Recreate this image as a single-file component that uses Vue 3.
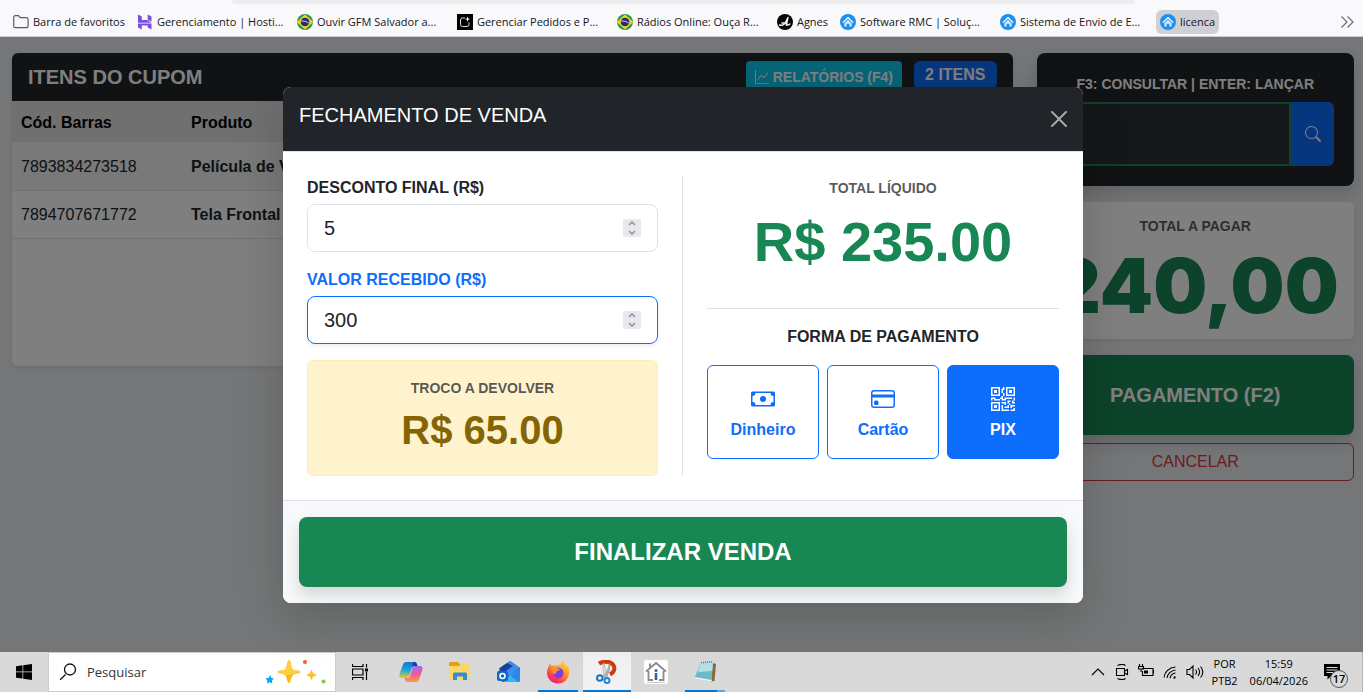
<template>
  <div class="screen">

    <!-- ── Bookmarks toolbar ── -->
    <header class="browser-bar">
      <div class="address-edge"></div>
      <nav class="bookmarks">
        <a
          v-for="(b, i) in bookmarks"
          :key="i"
          href="#"
          class="bookmark"
          :class="{ wide: b.wide, active: b.active }"
          @click.prevent
        >
          <svg v-if="b.icon === 'folder'" viewBox="0 0 16 16" width="16" height="16">
            <path d="M.7 3.2a1.5 1.5 0 0 1 1.5-1.5h3.2l1.9 2h6.3a1.5 1.5 0 0 1 1.5 1.5v7a1.5 1.5 0 0 1-1.5 1.5H2.2a1.5 1.5 0 0 1-1.500-1.500z" fill="none" stroke="#5b5b66" stroke-width="1.2" />
          </svg>
          <svg v-else-if="b.icon === 'hosting'" viewBox="0 0 16 16" width="16" height="16">
            <path d="M1 .5l3.800 2V6h5.500L14.500 8.800H1zM10.700.5l3.800 2v5.300l-3.800-2zM1 9.600h9.800l3.700 0V15.500l-3.800-2V11.500H4.800V15.500L1 13.500z" fill="#7a4fe0" />
          </svg>
          <svg v-else-if="b.icon === 'brazil'" viewBox="0 0 16 16" width="16" height="16">
            <circle cx="8" cy="8" r="8" fill="#2d9b4a" />
            <path d="M8 1.500L15.200 8 8 14.500.800 8z" fill="#f5d327" stroke="#f5d327" stroke-width="1.500" stroke-linejoin="round" />
            <circle cx="8" cy="8" r="4.300" fill="#2a2a72" />
            <path d="M4 7.200c2.800-.6 5.500.2 7.800 2" fill="none" stroke="#c9cde8" stroke-width="1" />
          </svg>
          <svg v-else-if="b.icon === 'orders'" viewBox="0 0 16 16" width="16" height="16">
            <path d="M0 0h16v16H0z" fill="#000" />
            <path d="M8 4H5.500A2 2 0 0 0 3.500 6v4.500a2 2 0 0 0 2 2H10a2 2 0 0 0 2-2V8.500" fill="none" stroke="#ddd" stroke-width="1" />
            <path d="M10.500 2.500l.7 1.900 1.900.7-1.900.7-.7 1.900-.7-1.900-1.900-.7 1.900-.7z" fill="#fff" />
          </svg>
          <svg v-else-if="b.icon === 'agnes'" viewBox="0 0 16 16" width="16" height="16">
            <circle cx="8" cy="8" r="8" fill="#050505" />
            <path d="M2.500 11c3 1 5-.5 6.500-3.500L11 3.500M10.800 4L9.300 11c1.500.3 2.500-.2 3.500-1M5 9l5 .2" fill="none" stroke="#fff" stroke-width="1.400" stroke-linecap="round" />
          </svg>
          <svg v-else viewBox="0 0 16 16" width="16" height="16">
            <circle cx="8" cy="8" r="8" fill="#1b90f0" />
            <path d="M2.800 8.600L8 3.700l5.200 4.900" fill="none" stroke="#fff" stroke-width="1.300" />
            <path d="M4.300 9.200L8 5.800l3.700 3.400v3.300H9.300V9.800H6.700v2.700H4.300z" fill="#cfe7fc" />
          </svg>
          <span>{{ b.label }}</span>
        </a>
        <button class="more-bookmarks" aria-label="Mais favoritos">
          <svg viewBox="0 0 14 14" width="14" height="14">
            <path d="M1.500 1.500L7 7l-5.500 5.500M7.500 1.500L13 7l-5.500 5.500" fill="none" stroke="#6a6a74" stroke-width="1.200" />
          </svg>
        </button>
      </nav>
    </header>

    <!-- ── Point of sale page ── -->
    <div class="viewport">
      <main class="pos-row">
        <section class="col-items">
          <div class="card items-card">
            <div class="items-header">
              <h2>ITENS DO CUPOM</h2>
              <div class="header-actions">
                <button class="btn-report">
                  <svg viewBox="0 0 16 16" width="14" height="14" fill="currentColor">
                    <path fill-rule="evenodd" d="M0 0h1v15h15v1H0zm14.817 3.113a.5.5 0 0 1 .07.704l-4.5 5.5a.5.5 0 0 1-.74.037L7.06 6.767l-3.656 5.027a.5.5 0 0 1-.808-.588l4-5.5a.5.5 0 0 1 .758-.06l2.609 2.61 4.15-5.073a.5.5 0 0 1 .704-.07" />
                  </svg>
                  RELATÓRIOS (F4)
                </button>
                <span class="badge">{{ items.length }} ITENS</span>
              </div>
            </div>
            <table class="items-table">
              <thead>
                <tr>
                  <th class="code">Cód. Barras</th>
                  <th>Produto</th>
                </tr>
              </thead>
              <tbody>
                <tr v-for="item in items" :key="item.code">
                  <td class="code">{{ item.code }}</td>
                  <td class="product">{{ item.name }}</td>
                </tr>
              </tbody>
            </table>
          </div>
        </section>

        <aside class="col-side">
          <div class="search-card">
            <label for="barcode">F3: CONSULTAR | ENTER: LANÇAR</label>
            <div class="search-group">
              <input id="barcode" v-model="barcode" type="text" />
              <button aria-label="Consultar">
                <svg viewBox="0 0 16 16" width="16" height="16" fill="currentColor">
                  <path d="M11.742 10.344a6.5 6.5 0 1 0-1.397 1.398h-.001q.044.06.098.115l3.85 3.85a1 1 0 0 0 1.415-1.414l-3.85-3.85a1 1 0 0 0-.115-.1zM12 6.5a5.5 5.5 0 1 1-11 0 5.5 5.5 0 0 1 11 0" />
                </svg>
              </button>
            </div>
          </div>
          <div class="card total-card">
            <span class="caption">TOTAL A PAGAR</span>
            <strong>240,00</strong>
          </div>
          <button class="btn-pay">PAGAMENTO (F2)</button>
          <button class="btn-cancel">CANCELAR</button>
        </aside>
      </main>

      <!-- ── Checkout modal ── -->
      <div class="backdrop">
        <div class="modal" role="dialog" aria-labelledby="modal-title">
          <div class="modal-header">
            <h1 id="modal-title">FECHAMENTO DE VENDA</h1>
            <button class="btn-close" aria-label="Fechar">
              <svg viewBox="0 0 16 16" width="16" height="16" fill="currentColor">
                <path d="M.293.293a1 1 0 0 1 1.414 0L8 6.586 14.293.293a1 1 0 1 1 1.414 1.414L9.414 8l6.293 6.293a1 1 0 0 1-1.414 1.414L8 9.414l-6.293 6.293a1 1 0 0 1-1.414-1.414L6.586 8 .293 1.707a1 1 0 0 1 0-1.414" />
              </svg>
            </button>
          </div>

          <div class="modal-body">
            <div class="pane pane-left">
              <div v-for="f in fields" :key="f.id" class="field" :class="{ primary: f.primary }">
                <label :for="f.id">{{ f.label }}</label>
                <div class="number-box">
                  <input :id="f.id" v-model.number="f.value" type="number" />
                  <div class="spinner">
                    <button tabindex="-1" aria-label="Aumentar" @click="f.value++">
                      <svg viewBox="0 0 8 5" width="8" height="5"><path d="M1 4l3-3 3 3" /></svg>
                    </button>
                    <button tabindex="-1" aria-label="Diminuir" @click="f.value--">
                      <svg viewBox="0 0 8 5" width="8" height="5"><path d="M1 1l3 3 3-3" /></svg>
                    </button>
                  </div>
                </div>
              </div>
              <div class="change-box">
                <span class="caption">TROCO A DEVOLVER</span>
                <strong>R$ {{ change }}</strong>
              </div>
            </div>

            <div class="pane pane-right">
              <div class="net-total">
                <span class="caption">TOTAL LÍQUIDO</span>
                <strong>R$ {{ netTotal }}</strong>
              </div>
              <h3>FORMA DE PAGAMENTO</h3>
              <div class="methods">
                <button
                  v-for="m in methods"
                  :key="m.name"
                  class="method"
                  :class="{ selected: m.name === method }"
                  @click="method = m.name"
                >
                  <svg viewBox="0 0 16 16" width="24" height="24" fill="currentColor">
                    <path v-for="(d, i) in m.paths" :key="i" :d="d" />
                  </svg>
                  {{ m.name }}
                </button>
              </div>
            </div>
          </div>

          <div class="modal-footer">
            <button class="btn-finish">FINALIZAR VENDA</button>
          </div>
        </div>
      </div>
    </div>

    <!-- ── Windows taskbar ── -->
    <footer class="taskbar">
      <button class="task-btn" aria-label="Iniciar">
        <svg viewBox="0 0 16 16" width="16" height="16">
          <path d="M0 2.200L6.500 1.300v6.300H0zM7.200 1.200L16 0v7.600H7.200zM0 8.300h6.500v6.300L0 13.700zM7.200 8.300H16V16l-8.800-1.200z" />
        </svg>
      </button>
      <label class="task-search">
        <svg viewBox="0 0 18 18" width="18" height="18">
          <path d="M6.500 11.500L1.200 16.800M16.500 6.500a5.500 5.500 0 1 1-11 0 5.500 5.500 0 0 1 11 0z" fill="none" stroke="#111" stroke-width="1.300" />
        </svg>
        <input type="text" placeholder="Pesquisar" aria-label="Pesquisar" />
        <svg class="sparkles" viewBox="0 0 62 26" width="62" height="26">
          <path d="M24 1c2 0 2 8 4 9.500S35.500 11 35.500 13 30 14 28 16s-2 8-4 8-2-6-4-8-7.500-1-7.500-3 5.500-1 7.500-2.500S22 1 24 1z" fill="#fbb91f" />
          <path d="M24 1c2 0 2 8 4 9.500S35.500 11 35.500 13c-8 1-10 4-16 3-2-2-7-1-7-3s5.500-1 7.500-2.500S22 1 24 1z" fill="#ffcf3f" />
          <path d="M46.500 10.500l1.700 3.800 3.800 1.700-3.800 1.700-1.700 3.800-1.700-3.800L41 16l3.800-1.700z" fill="#fbc02d" />
          <path d="M5.500 16l.8 3 2.700.5-2 2 .3 3-2.800-1.300L2 24.500l.3-3L.5 19.300l3.200-.6z" fill="#03a9f4" />
          <circle cx="40" cy="3" r="2.100" fill="#f4622c" />
          <circle cx="58.500" cy="22.500" r="2.100" fill="#8bc34a" />
        </svg>
      </label>
      <button class="task-btn" aria-label="Visão de tarefas">
        <svg viewBox="0 0 16 16" width="16" height="16">
          <path d="M.500 0v2.500h10.500V0M.500 16v-2.500h10.500V16M.500 5h10.500v6H.500zM14.500 0v3.500M14.500 8v8" fill="none" stroke="#000" stroke-width="1.200" />
          <path d="M13 4.500h3v3h-3z" />
        </svg>
      </button>

      <nav class="apps">
        <button class="task-btn" aria-label="Copilot">
          <svg viewBox="0 0 24 24" width="24" height="24">
            <defs>
              <linearGradient id="cp1" x1="0" y1="0" x2="0" y2="1">
                <stop offset="0" stop-color="#1673d8" /><stop offset=".5" stop-color="#18a8d8" /><stop offset="1" stop-color="#f0c830" />
              </linearGradient>
              <linearGradient id="cp2" x1="0" y1="0" x2="0" y2="1">
                <stop offset="0" stop-color="#9b6cf0" /><stop offset=".5" stop-color="#ef5a9d" /><stop offset="1" stop-color="#ff9a3d" />
              </linearGradient>
            </defs>
            <path d="M8 2h7.500c2 0 2.300 1.500 3 4h-3c-1.500 0-2.300.7-2.800 2.200L10.500 16c-.6 1.500-1.500 2-3 2H3c-2.500 0-3-2-2.300-4.500L4 4.500C4.600 2.800 5.800 2 8 2z" fill="url(#cp1)" />
            <path d="M16 22H8.500c-2 0-2.300-1.500-3-4h3c1.500 0 2.300-.7 2.800-2.200L13.500 8c.6-1.500 1.500-2 3-2H21c2.500 0 3 2 2.300 4.500L20 19.500c-.6 1.700-1.800 2.500-4 2.500z" fill="url(#cp2)" />
            <path d="M15 2c2.300 0 2.700 1.500 3.500 4h-3c-1.300 0-2 .5-2.500 1.500L14 2z" fill="#1b3fae" />
          </svg>
        </button>
        <button class="task-btn" aria-label="Explorador de Arquivos">
          <svg viewBox="0 0 24 24" width="24" height="24">
            <path d="M1 3.500A1.500 1.500 0 0 1 2.500 2H10l2 2.500V9H1z" fill="#e0a010" />
            <path d="M1 6h10l2-2h9v16H1z" fill="#fdd663" />
            <path d="M5 20v-6a1.500 1.500 0 0 1 1.500-1.500h11A1.500 1.500 0 0 1 19 14v6h-4v-3.500H9V20z" fill="#2f8fd8" />
          </svg>
        </button>
        <button class="task-btn" aria-label="Outlook">
          <svg viewBox="0 0 24 24" width="24" height="24">
            <path d="M2 8.500L13 1l10 7v12a2 2 0 0 1-2 2H5z" fill="#1257c0" />
            <path d="M13 1l10 7-11 8-8-7z" fill="#3f8cf2" />
            <path d="M10 3l6 3-10 7-3-5z" fill="#1a3f9e" />
            <path d="M23 9v11a2 2 0 0 1-2 2H6l6-6z" fill="#36b4f0" />
            <path d="M23 9l-9 7 7 6a2 2 0 0 0 2-2z" fill="#2a86ea" />
            <rect x="0" y="11" width="11" height="10" rx="2" fill="#1065c8" />
            <circle cx="5.500" cy="16" r="2.500" fill="none" stroke="#fff" stroke-width="1.600" />
          </svg>
        </button>
        <button class="task-btn running" aria-label="Firefox">
          <svg viewBox="0 0 24 24" width="24" height="24">
            <defs>
              <linearGradient id="ff" x1=".8" y1="0" x2=".2" y2="1">
                <stop offset="0" stop-color="#ffe040" /><stop offset=".4" stop-color="#ff9a28" /><stop offset=".75" stop-color="#ff3b50" /><stop offset="1" stop-color="#e31587" />
              </linearGradient>
            </defs>
            <path d="M12 23.500A11 11 0 0 1 1.500 9C2 7 3 6 3.500 3.500L6 6c1.500-.6 3-.6 4.500 0 1-.5 2.500-1.500 4.500-1.500-.5-1.500 0-3 1.500-4.500.5 3 3 3.500 4.500 6.500.2-.5.200-1 0-1.500 2.500 3 2.500 6 2.200 8.500A11.300 11.300 0 0 1 12 23.500z" fill="url(#ff)" />
            <circle cx="12.300" cy="13" r="5.200" fill="#7a3fe0" />
            <path d="M5.500 8C8 6.500 9.500 7.500 11 8.500l3 .5c-.5 1.500-2.500 1.500-3.500 2.500s0 2.500-1.200 2.500C7 14 5 11 5.500 8z" fill="#ff9528" />
          </svg>
        </button>
        <button class="task-btn running current" aria-label="Ferramenta de Captura">
          <svg viewBox="0 0 24 24" width="24" height="24">
            <path d="M4 3.500c4-2.500 10.500-2.500 13.500.5s2.500 8-2.500 10.500" fill="none" stroke="#cf3a0c" stroke-width="4" />
            <path d="M8.500 2l4 15-2 1.500C8 13 7.500 8 8.500 2z" fill="#e5e5e5" stroke="#999" stroke-width=".6" />
            <path d="M14.500 3c1.500 5-.5 10.500-4.500 14.500L8.500 16c3-3 5-7.500 6-13z" fill="#b5b5b5" stroke="#888" stroke-width=".6" />
            <circle cx="4.800" cy="18" r="2.800" fill="none" stroke="#1976c5" stroke-width="2" />
            <circle cx="12" cy="20.500" r="2.500" fill="none" stroke="#1f86d8" stroke-width="2" />
          </svg>
        </button>
        <button class="task-btn" aria-label="Sistema">
          <svg viewBox="0 0 24 24" width="24" height="24">
            <rect width="24" height="24" rx="2" fill="#fff" />
            <path d="M2 11.500L12 3l10 8.500M4.500 11v9H9M19.500 11v9H15M6 7V3.500" fill="none" stroke="#8a8a8a" stroke-width="1.800" />
            <path d="M12 13v7" stroke="#1769b0" stroke-width="2.600" />
            <circle cx="12" cy="10.500" r="1.500" fill="#1769b0" />
            <path d="M3 22.500h18" stroke="#bbb" stroke-width=".8" />
          </svg>
        </button>
        <button class="task-btn running grouped" aria-label="Bloco de Notas">
          <svg viewBox="0 0 24 24" width="24" height="24">
            <path d="M19.500 3l3.500 1-1.500 17-3 .5z" fill="#8a6a35" />
            <path d="M8 3l12-1-1.500 19.500L1 18.500z" fill="#6fb8c6" />
            <path d="M8 3l12-1-.8 9L5 12z" fill="#b5e0e8" />
            <path d="M1 18.500l17.500 3 .1-1.500L1.500 17z" fill="#eef6f7" />
            <path d="M8 2.800l12-1.200" stroke="#777" stroke-width="1.600" stroke-dasharray="1 1" />
          </svg>
        </button>
      </nav>

      <div class="tray">
        <svg viewBox="0 0 16 16" width="16" height="16"><path d="M2 11l6-6 6 6" /></svg>
        <svg viewBox="0 0 16 16" width="16" height="16"><path d="M3.500 1.500c3-1.300 6-1.300 8 0M3.500 14.500c3 1.300 6 1.300 8 0M2.500 4.500h8v7h-8zM10.500 7l3-1.500v5l-3-1.500" /></svg>
        <svg viewBox="0 0 16 16" width="16" height="16"><path d="M4 4.500h11v7H4.500V7M15 6.500h1v3M1.500 0v2.500M4.500 0v2.500M.500 2.500h5V5h-5zM3 5v3" /><path d="M6 6.500h4v3H6z" fill="#000" /></svg>
        <svg viewBox="0 0 16 16" width="16" height="16"><path d="M2 13.500C2.500 8 7 3.500 13.500 3M5 14c.5-4 4-7.500 8.500-8M8 14.300c.5-2.500 2.500-5 5.500-5.300" /><path d="M11 14.500a3 3 0 0 1 2.500-2.500v2.500z" fill="#000" /></svg>
        <svg viewBox="0 0 18 16" width="18" height="16"><path d="M1 5.500h2.500L7 2v12L3.500 10.500H1zM9.500 5.500c1.300 1.500 1.300 3.500 0 5M12 4c2 2.500 2 5.500 0 8M14.500 2.500c3 3.500 3 7.500 0 11" /></svg>
        <div class="tray-text lang"><span>POR</span><span>PTB2</span></div>
        <div class="tray-text clock"><span>15:59</span><span>06/04/2026</span></div>
        <button class="notifications" aria-label="Notificações">
          <svg viewBox="0 0 16 16" width="16" height="16"><path d="M0 0h16v12H7l-3.500 3.500V12H0z" fill="#000" /><path class="lines" d="M2.500 3.500h11M2.500 6h11M2.500 8.500h7" /></svg>
          <span class="count">17</span>
        </button>
      </div>
    </footer>
  </div>
</template>

<script setup>
import { ref, computed } from 'vue'

const bookmarks = [
  { icon: 'folder', label: 'Barra de favoritos' },
  { icon: 'hosting', label: 'Gerenciamento | Hosti...', wide: true },
  { icon: 'brazil', label: 'Ouvir GFM Salvador a...', wide: true },
  { icon: 'orders', label: 'Gerenciar Pedidos e P...', wide: true },
  { icon: 'brazil', label: 'Rádios Online: Ouça R...', wide: true },
  { icon: 'agnes', label: 'Agnes' },
  { icon: 'house', label: 'Software RMC | Soluç...', wide: true },
  { icon: 'house', label: 'Sistema de Envio de E...', wide: true },
  { icon: 'house', label: 'licenca', active: true }
]

const items = [
  { code: '7893834273518', name: 'Película de Vidro' },
  { code: '7894707671772', name: 'Tela Frontal' }
]

const barcode = ref('')
const total = 240

// ── Checkout ──
const fields = ref([
  { id: 'discount', label: 'DESCONTO FINAL (R$)', value: 5 },
  { id: 'received', label: 'VALOR RECEBIDO (R$)', value: 300, primary: true }
])

const netTotal = computed(() => (total - fields.value[0].value).toFixed(2))
const change   = computed(() => (fields.value[1].value - netTotal.value).toFixed(2))

const method = ref('PIX')

const methods = [
  {
    name: 'Dinheiro',
    paths: [
      'M8 10a2 2 0 1 0 0-4 2 2 0 0 0 0 4',
      'M0 4a1 1 0 0 1 1-1h14a1 1 0 0 1 1 1v8a1 1 0 0 1-1 1H1a1 1 0 0 1-1-1zm3 0a2 2 0 0 1-2 2v4a2 2 0 0 1 2 2h10a2 2 0 0 1 2-2V6a2 2 0 0 1-2-2z'
    ]
  },
  {
    name: 'Cartão',
    paths: [
      'M0 4a2 2 0 0 1 2-2h12a2 2 0 0 1 2 2v8a2 2 0 0 1-2 2H2a2 2 0 0 1-2-2zm2-1a1 1 0 0 0-1 1v1h14V4a1 1 0 0 0-1-1zm13 4H1v5a1 1 0 0 0 1 1h12a1 1 0 0 0 1-1z',
      'M2 10a1 1 0 0 1 1-1h1a1 1 0 0 1 1 1v1a1 1 0 0 1-1 1H3a1 1 0 0 1-1-1z'
    ]
  },
  {
    name: 'PIX',
    paths: [
      'M2 2h2v2H2z',
      'M6 0v6H0V0zM5 1H1v4h4zM4 12H2v2h2z',
      'M6 10v6H0v-6zm-5 1v4h4v-4zm11-9h2v2h-2z',
      'M10 0v6h6V0zm5 1v4h-4V1zM8 1V0h1v2H8v2H7V1zm0 5V4h1v2zM6 8V7h1V6h1v2h1V7h5v1h-4v1H7V8zm0 0v1H2V8H1v1H0V7h3v1zm10 1h-1V7h1zm-1 0h-1v2h2v-1h-1zm-4 0h2v1h-1v1h-1zm2 3v-1h-1v1h-1v1H9v1h3v-2zm0 0h3v1h-2v1h-1zm-4-1v1h1v-2H7v1z',
      'M7 12h1v3h4v1H7zm9 2v2h-3v-1h2v-1z'
    ]
  }
]
</script>

<style scoped>
.screen {
  display: flex;
  flex-direction: column;
  min-height: 100vh;
  overflow: hidden;
  font-family: "Liberation Sans", Arial, sans-serif;
  font-size: 16px;
  line-height: 24px;
  color: #212529;
}

.screen *,
.screen *::before,
.screen *::after { box-sizing: border-box; }

h1, h2, h3 { margin: 0; }
svg { flex: none; display: block; }

button {
  font: inherit;
  border: 0;
  padding: 0;
  background: none;
  color: inherit;
  cursor: pointer;
}

.caption {
  font-size: 14px;
  font-weight: 700;
  line-height: 21px;
  color: rgba(33, 37, 41, 0.75);
}

/* ── Bookmarks toolbar ── */
.browser-bar {
  background: #f9f9fb;
  border-bottom: 1px solid #cccccf;
}

.address-edge {
  height: 4px;
  margin: 0 228px 0 232px;
  background: #ededf0;
  border-radius: 0 0 4px 4px;
}

.bookmarks {
  display: flex;
  align-items: center;
  gap: 4px;
  height: 32px;
  padding: 4px 9px 0;
  font-family: "Open Sans", "Noto Sans", sans-serif;
  font-size: 11px;
  line-height: 16px;
}

.bookmark {
  display: flex;
  align-items: center;
  gap: 4px;
  height: 24px;
  padding: 0 4px;
  border-radius: 6px;
  color: #15141a;
  text-decoration: none;
  white-space: nowrap;
}

.bookmark.wide { width: 156px; }
.bookmark.active { background: #d0d0d4; }
.more-bookmarks { margin-left: auto; }

/* ── Page ── */
.viewport {
  position: relative;
  flex: 1;
  display: flex;
  margin-right: -3px;
  background: #e9ecef;
}

.pos-row {
  display: flex;
  align-items: flex-start;
  flex: 1;
  padding: 16px 0;
}

.col-items { width: 75%; padding: 0 12px; }

.col-side {
  display: flex;
  flex-direction: column;
  width: 25%;
  padding: 0 12px;
}

.card {
  background: #fff;
  border-radius: 6px;
  box-shadow: 0 2px 4px rgba(0, 0, 0, 0.075);
}

.items-card { min-height: 313px; overflow: hidden; }

.items-header {
  display: flex;
  justify-content: space-between;
  align-items: center;
  padding: 8px 16px;
  background: #212529;
  color: #fff;
  font-weight: 700;
}

.items-header h2 { font-size: 20px; line-height: 24px; }

.header-actions {
  display: flex;
  align-items: flex-start;
  gap: 12px;
}

.btn-report {
  display: flex;
  align-items: center;
  gap: 4px;
  height: 32px;
  padding: 0 9px;
  border-radius: 4px;
  background: #0dcaf0;
  font-size: 14px;
}

.badge {
  padding: 2px 11px;
  border-radius: 6px;
  background: #0d6efd;
}

.items-table {
  width: 100%;
  border-collapse: collapse;
}

.items-table th,
.items-table td {
  padding: 2px 9px 0;
  text-align: left;
}

.items-table th {
  height: 41px;
  background: #e0e0e0;
  color: #000;
}

.items-table td {
  height: 48px;
  border-bottom: 1px solid #dee2e6;
}

.items-table .code { width: 170px; }
.items-table .product { font-weight: 700; }
.items-table tbody tr:nth-child(odd) { background: #f2f2f2; }

/* ── Side column ── */
.search-card {
  padding: 20px;
  border-radius: 8px;
  background: #212529;
  box-shadow: 0 8px 16px rgba(0, 0, 0, 0.15);
}

.search-card label {
  display: block;
  margin-bottom: 6px;
  color: #fff;
  font-size: 14px;
  font-weight: 700;
  line-height: 23px;
  text-align: center;
}

.search-group { display: flex; height: 64px; }

.search-group input {
  flex: 1;
  min-width: 0;
  padding: 8px 16px;
  border: 2px solid #198754;
  border-radius: 8px 0 0 8px;
  background: #2b3035;
  color: #fff;
  font: inherit;
  outline: none;
}

.search-group button {
  width: 43px;
  display: flex;
  align-items: center;
  justify-content: center;
  border-radius: 0 6px 6px 0;
  background: #0d6efd;
  color: #fff;
}

.total-card {
  display: flex;
  flex-direction: column;
  align-items: center;
  margin: 16px 0;
  padding: 14px 16px 6px;
}

.total-card strong {
  font-family: Inter, "Liberation Sans", sans-serif;
  font-size: 76px;
  font-weight: 900;
  line-height: 96px;
  color: #198754;
}

.btn-pay {
  height: 80px;
  border-radius: 8px;
  background: #198754;
  color: #fff;
  font-size: 20px;
  font-weight: 700;
  box-shadow: 0 8px 16px rgba(0, 0, 0, 0.15);
}

.btn-cancel {
  height: 38px;
  margin-top: 8px;
  border: 1px solid #dc3545;
  border-radius: 6px;
  color: #dc3545;
}

/* ── Modal ── */
.backdrop {
  position: absolute;
  inset: 0;
  display: flex;
  align-items: center;
  justify-content: center;
  background: rgba(0, 0, 0, 0.5);
}

.modal {
  width: 100%;
  max-width: 800px;
  border-radius: 8px;
  overflow: hidden;
  background: #fff;
  box-shadow: 0 16px 48px rgba(0, 0, 0, 0.175);
}

.modal-header {
  display: flex;
  justify-content: space-between;
  align-items: flex-start;
  padding: 16px;
  border-bottom: 1px solid #dee2e6;
  background: #212529;
  color: #fff;
}

.modal-header h1 {
  font-size: 20px;
  font-weight: 400;
  line-height: 24px;
}

.btn-close {
  padding: 8px 0;
  color: rgba(255, 255, 255, 0.6);
}

.modal-body { display: flex; padding: 24px; }

.pane {
  display: flex;
  flex-direction: column;
  width: 50%;
}

.pane-left { padding-right: 24px; border-right: 1px solid #dee2e6; }
.pane-right { padding-left: 24px; }

.field { margin-bottom: 16px; }

.field label {
  display: block;
  margin-bottom: 4px;
  font-weight: 700;
}

.number-box {
  display: flex;
  align-items: center;
  height: 48px;
  padding: 0 16px;
  border: 1px solid #dee2e6;
  border-radius: 8px;
}

.number-box input {
  flex: 1;
  min-width: 0;
  padding: 0;
  border: 0;
  background: transparent;
  color: inherit;
  font: inherit;
  font-size: 20px;
  outline: none;
  appearance: textfield;
}

.number-box input::-webkit-inner-spin-button { display: none; }

.spinner { width: 18px; background: #e9e9ed; }

.spinner button {
  display: flex;
  align-items: center;
  justify-content: center;
  width: 18px;
  height: 9px;
}

.spinner path { fill: none; stroke: #8f8f9d; stroke-width: 1.5; }

.field.primary label { color: #0d6efd; }

.field.primary .number-box {
  border-color: #0d6efd;
  box-shadow: 0 2px 4px rgba(0, 0, 0, 0.075);
}

.change-box {
  display: flex;
  flex-direction: column;
  align-items: center;
  gap: 7px;
  height: 116px;
  padding: 17px;
  border: 1px solid #ffecb5;
  border-radius: 6px;
  background: #fff3cd;
}

.change-box strong {
  font-size: 40px;
  line-height: 48px;
  color: #856404;
}

.net-total {
  display: flex;
  flex-direction: column;
  align-items: center;
  gap: 9px;
  padding: 2px 0 33px;
  border-bottom: 1px solid #dee2e6;
}

.net-total strong {
  font-size: 56px;
  line-height: 67px;
  color: #198754;
}

.pane-right h3 {
  margin: 16px 0;
  font-size: 16px;
  line-height: 24px;
  text-align: center;
}

.methods { display: flex; gap: 8px; }

.method {
  flex: 1;
  display: flex;
  flex-direction: column;
  align-items: center;
  justify-content: center;
  gap: 7px;
  height: 94px;
  padding-top: 5px;
  border: 1px solid #0d6efd;
  border-radius: 6px;
  color: #0d6efd;
  font-weight: 700;
}

.method.selected { background: #0d6efd; color: #fff; }

.modal-footer {
  padding: 16px;
  border-top: 1px solid #dee2e6;
  background: #f8f9fa;
}

.btn-finish {
  width: 100%;
  height: 70px;
  border-radius: 8px;
  background: #198754;
  color: #fff;
  font-size: 24px;
  font-weight: 700;
  box-shadow: 0 8px 16px rgba(0, 0, 0, 0.15);
}

/* ── Taskbar ── */
.taskbar {
  display: flex;
  height: 40px;
  background: #d9d9d9;
  color: #000;
  font-family: "Open Sans", "Noto Sans", sans-serif;
}

.task-btn {
  display: flex;
  align-items: center;
  justify-content: center;
  width: 48px;
  height: 40px;
}

.task-search {
  display: flex;
  align-items: center;
  width: 288px;
  padding: 0 8px 0 10px;
  border: 1px solid #ccc;
  background: #fff;
}

.task-search input {
  flex: 1;
  min-width: 0;
  padding: 0 10px;
  border: 0;
  outline: none;
  font: inherit;
  font-size: 13px;
}

.task-search input::placeholder { color: #333; opacity: 1; }

.apps { display: flex; gap: 1px; margin-left: 3px; }

.running { background: linear-gradient(#0078d7, #0078d7) bottom / 40px 2px no-repeat; }
.running.current { background-size: 48px 2px; background-color: #f1f1f1; }
.running.grouped {
  background-image: linear-gradient(to right, #0078d7 32px, #5ba7e4 32px);
}

.tray {
  display: flex;
  align-items: center;
  gap: 8px;
  margin-left: auto;
  padding-right: 12px;
  border-right: 1px solid #b5b5b5;
}

.tray svg path { fill: none; stroke: #000; stroke-width: 1.1; }
.tray svg path[fill] { fill: #000; stroke: none; }
.tray svg .lines { stroke: #ddd; }

.tray-text {
  display: flex;
  flex-direction: column;
  align-items: center;
  font-size: 11px;
  line-height: 17px;
}

.clock { margin-left: 4px; }

.notifications {
  position: relative;
  margin-left: 8px;
  width: 26px;
  height: 16px;
}

.notifications .count {
  position: absolute;
  left: 6px;
  top: 6px;
  width: 18px;
  height: 18px;
  border: 1px solid #555;
  border-radius: 50%;
  background: #d9d9d9;
  font-size: 11px;
  font-weight: 600;
  line-height: 16px;
  text-align: center;
}
</style>

<style>
body { margin: 0; background: #e9ecef; }
</style>
